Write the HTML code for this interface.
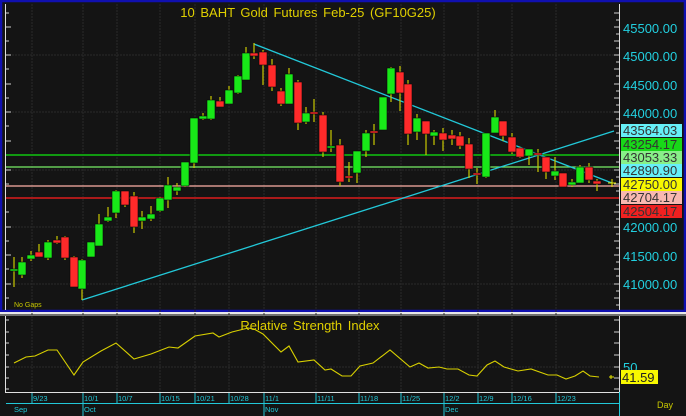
<!DOCTYPE html>
<html><head><meta charset="utf-8"><style>
html,body{margin:0;padding:0;background:#141414;width:686px;height:416px;overflow:hidden}
svg{display:block}
text{font-family:"Liberation Sans",sans-serif}
</style></head><body>
<svg width="686" height="416" viewBox="0 0 686 416" xmlns="http://www.w3.org/2000/svg">
<rect x="0" y="0" width="686" height="416" fill="#141414"/>
<!-- main panel frame -->
<rect x="1" y="1" width="684" height="310" fill="none" stroke="#1010b0" stroke-width="2.5"/>
<rect x="0" y="312" width="686" height="2" fill="#e8e8e8"/>
<rect x="0" y="314" width="686" height="2" fill="#707070"/>
<!-- grid -->
<g stroke="#2a2a2a" stroke-width="1" stroke-dasharray="2,1">
<line x1="6" y1="55" x2="619" y2="55"/><line x1="6" y1="112" x2="619" y2="112"/><line x1="6" y1="170" x2="619" y2="170"/><line x1="6" y1="227" x2="619" y2="227"/><line x1="6" y1="284" x2="619" y2="284"/>
<line x1="32" y1="4" x2="32" y2="392"/><line x1="83" y1="4" x2="83" y2="392"/><line x1="117" y1="4" x2="117" y2="392"/><line x1="160" y1="4" x2="160" y2="392"/><line x1="195" y1="4" x2="195" y2="392"/><line x1="229" y1="4" x2="229" y2="392"/><line x1="264" y1="4" x2="264" y2="392"/><line x1="316" y1="4" x2="316" y2="392"/><line x1="359" y1="4" x2="359" y2="392"/><line x1="401" y1="4" x2="401" y2="392"/><line x1="444" y1="4" x2="444" y2="392"/><line x1="478" y1="4" x2="478" y2="392"/><line x1="512" y1="4" x2="512" y2="392"/><line x1="556" y1="4" x2="556" y2="392"/>
<line x1="6" y1="367" x2="619" y2="367"/>
</g>
<!-- axes -->
<line x1="5.5" y1="4" x2="5.5" y2="310" stroke="#e0e0e0"/>
<line x1="619.5" y1="4" x2="619.5" y2="310" stroke="#e0e0e0"/>
<g stroke="#d0d0d0">
<path d="M6 13h3M6 27h5M6 41h3M6 55h5M6 69h3M6 84h5M6 98h3M6 112h5M6 126h3M6 141h5M6 155h3M6 170h5M6 184h3M6 198h5M6 212h3M6 227h5M6 241h3M6 255h5M6 269h3M6 284h5M6 298h3"/>
<path d="M614 13h5M616 20h3M614 27h5M616 34h3M614 41h5M616 48h3M614 55h5M616 62h3M614 69h5M616 76h3M614 84h5M616 91h3M614 98h5M616 105h3M614 112h5M616 119h3M614 126h5M616 133h3M614 141h5M616 148h3M614 155h5M616 162h3M614 170h5M616 177h3M614 184h5M616 191h3M614 198h5M616 205h3M614 212h5M616 219h3M614 227h5M616 234h3M614 241h5M616 248h3M614 255h5M616 262h3M614 269h5M616 276h3M614 284h5M616 291h3M614 298h5M616 305h3"/>
</g>
<!-- horizontal lines -->
<line x1="6" y1="155" x2="619" y2="155" stroke="#119911" stroke-width="2"/>
<line x1="6" y1="167" x2="619" y2="167" stroke="#77ee66" stroke-width="1.3"/>
<line x1="6" y1="186" x2="619" y2="186" stroke="#ffb0a8" stroke-width="1.3"/>
<line x1="6" y1="198" x2="619" y2="198" stroke="#aa1a1a" stroke-width="2"/>
<!-- trend lines -->
<line x1="254" y1="44" x2="612" y2="183" stroke="#22c8d8" stroke-width="1.3"/>
<line x1="82" y1="300" x2="614" y2="131" stroke="#22c8d8" stroke-width="1.3"/>
<!-- candles -->
<g stroke="#c8c800" stroke-width="1.2" id="w">
<path d="M14 257V287M22 257V278M31 251V261M39 244V257M48 240V260M57 236V244M65 236V260M74 256V287M82 259V300M91 255V257M99 214V246M108 207V222M116 190V218M125 191V207M134 192V233M142 211V229M151 206V221M160 197V212M168 177V208M177 183V195M185 162V187M194 118V168M203 113V120M211 96V120M220 97V107M229 86V104M238 75V94M246 47V80M254 43V59M263 50V85M272 59V91M281 88V106M289 68V104M298 80V130M306 107V124M314 99V122M323 112V157M331 130V152M340 139V186M349 162V182M357 151V183M366 130V157M374 124V145M383 97V130M391 67V102M400 66V111M408 80V145M417 114V140M426 121V155M434 130V145M443 128V151M452 130V145M460 132V149M469 138V178M477 168V184M486 133V178M495 110V133M503 121V141M512 133V154M520 147V158M529 149V165M538 149V172M546 157V179M555 157V180M563 173V187M572 179V187M580 165V183M589 163V183M597 179V191"/>
</g>
<g fill="#18e818" stroke="#0a0a0a" stroke-width="0.6">
<rect x="10" y="269" width="8" height="2"/><rect x="18" y="262" width="8" height="13"/><rect x="27" y="255" width="8" height="4"/><rect x="44" y="242" width="8" height="16"/><rect x="78" y="260" width="8" height="29"/><rect x="87" y="242" width="8" height="15"/><rect x="95" y="224" width="8" height="22"/><rect x="104" y="217" width="8" height="4"/><rect x="112" y="191" width="8" height="22"/><rect x="138" y="217" width="8" height="4"/><rect x="147" y="214" width="8" height="5"/><rect x="156" y="198" width="8" height="13"/><rect x="164" y="185" width="8" height="15"/><rect x="173" y="187" width="8" height="4"/><rect x="181" y="162" width="8" height="24"/><rect x="190" y="118" width="8" height="45"/><rect x="199" y="116" width="8" height="3"/><rect x="207" y="100" width="8" height="19"/><rect x="225" y="90" width="8" height="14"/><rect x="234" y="76" width="8" height="17"/><rect x="242" y="53" width="8" height="27"/><rect x="285" y="74" width="8" height="30"/><rect x="302" y="113" width="8" height="9"/><rect x="327" y="146" width="8" height="2"/><rect x="353" y="151" width="8" height="22"/><rect x="362" y="133" width="8" height="18"/><rect x="379" y="97" width="8" height="33"/><rect x="387" y="68" width="8" height="26"/><rect x="413" y="118" width="8" height="14"/><rect x="430" y="132" width="8" height="4"/><rect x="482" y="133" width="8" height="44"/><rect x="491" y="117" width="8" height="16"/><rect x="525" y="149" width="8" height="7"/><rect x="551" y="171" width="8" height="5"/><rect x="568" y="182" width="8" height="3"/><rect x="576" y="167" width="8" height="16"/>
</g>
<g fill="#ff2a2a" stroke="#0a0a0a" stroke-width="0.6">
<rect x="35" y="252" width="8" height="5"/><rect x="53" y="240" width="8" height="3"/><rect x="61" y="237" width="8" height="21"/><rect x="70" y="257" width="8" height="30"/><rect x="121" y="191" width="8" height="14"/><rect x="130" y="196" width="8" height="31"/><rect x="216" y="101" width="8" height="6"/><rect x="250" y="53" width="8" height="3"/><rect x="259" y="52" width="8" height="13"/><rect x="268" y="65" width="8" height="22"/><rect x="277" y="91" width="8" height="13"/><rect x="294" y="82" width="8" height="41"/><rect x="310" y="112" width="8" height="2"/><rect x="319" y="115" width="8" height="37"/><rect x="336" y="145" width="8" height="37"/><rect x="345" y="176" width="8" height="2"/><rect x="370" y="131" width="8" height="2"/><rect x="396" y="72" width="8" height="21"/><rect x="404" y="84" width="8" height="50"/><rect x="422" y="121" width="8" height="13"/><rect x="439" y="133" width="8" height="7"/><rect x="448" y="135" width="8" height="4"/><rect x="456" y="136" width="8" height="10"/><rect x="465" y="144" width="8" height="25"/><rect x="473" y="173" width="8" height="2"/><rect x="499" y="121" width="8" height="15"/><rect x="508" y="137" width="8" height="15"/><rect x="516" y="148" width="8" height="9"/><rect x="534" y="153" width="8" height="2"/><rect x="542" y="157" width="8" height="15"/><rect x="559" y="173" width="8" height="14"/><rect x="585" y="167" width="8" height="13"/><rect x="593" y="181" width="8" height="3"/>
</g>
<path d="M608 183h8M612 179v8" stroke="#e8e800" stroke-width="1"/>
<!-- title -->
<text x="308" y="17" fill="#e0d000" font-size="13" text-anchor="middle" word-spacing="2">10 BAHT  Gold  Futures  Feb-25  (GF10G25)</text>
<text x="14" y="307" fill="#c8c800" font-size="7">No Gaps</text>
<!-- right labels -->
<g font-size="13" fill="#22d0e0">
<text x="623" y="33">45500.00</text><text x="623" y="61">45000.00</text><text x="623" y="90">44500.00</text><text x="623" y="118">44000.00</text><text x="623" y="232">42000.00</text><text x="623" y="261">41500.00</text><text x="623" y="289">41000.00</text>
</g>
<rect x="621" y="124" width="61" height="13" fill="#66f0f8"/>
<rect x="621" y="138" width="61" height="13" fill="#18d818"/>
<rect x="621" y="151" width="61" height="13" fill="#88f088"/>
<rect x="621" y="164" width="61" height="13" fill="#66f0f8"/>
<rect x="621" y="178" width="61" height="13" fill="#f8f800"/>
<rect x="621" y="191" width="61" height="13" fill="#f8b8b0"/>
<rect x="621" y="205" width="61" height="13" fill="#f02020"/>
<g font-size="13" fill="#333">
<text x="623" y="135">43564.03</text><text x="623" y="149">43254.17</text><text x="623" y="162">43053.33</text><text x="623" y="175">42890.90</text><text x="623" y="189">42750.00</text><text x="623" y="202">42704.17</text><text x="623" y="216">42504.17</text>
</g>
<!-- RSI panel -->
<line x1="5.5" y1="316" x2="5.5" y2="392" stroke="#e0e0e0"/>
<line x1="619.5" y1="316" x2="619.5" y2="392" stroke="#e0e0e0"/>
<line x1="5" y1="392.5" x2="620" y2="392.5" stroke="#e0e0e0"/>
<g stroke="#d0d0d0"><path d="M6 320h3M6 332h3M6 343h3M6 355h3M6 367h3M6 378h3M6 389h3M614 320h5M614 332h5M614 343h5M614 355h5M614 367h5M614 378h5M614 389h5"/></g>
<text x="310" y="330" fill="#e0d000" font-size="13" text-anchor="middle" word-spacing="2">Relative  Strength  Index</text>
<polyline fill="none" stroke="#d8d000" stroke-width="1.1" points="14,363 26,357 35,356 48,350 57,350 74,375 83,362 101,351 116,343 134,359 151,354 169,347 178,348 195,336 213,333 219,337 232,332 248,328 254,329 263,334 281,352 289,346 298,362 314,360 325,370 331,369 342,376 351,376 360,366 373,363 390,350 410,367 419,363 428,368 439,367 447,369 458,369 469,375 477,376 487,365 495,361 504,367 518,371 531,369 548,375 557,375 566,379 575,376 583,371 590,376 599,377"/>
<text x="623" y="372" fill="#22d0e0" font-size="13">50</text>
<path d="M609 377h5M611 375v4" stroke="#e8e800"/>
<rect x="621" y="370" width="37" height="14" fill="#f8f800"/>
<text x="622" y="382" fill="#222" font-size="13">41.59</text>
<!-- date axis -->
<line x1="6" y1="403.5" x2="620" y2="403.5" stroke="#22c8d8"/>
<line x1="619.5" y1="392" x2="619.5" y2="416" stroke="#22c8d8"/>
<g stroke="#22c8d8"><path d="M32 393v10M83 393v23M117 393v10M160 393v10M195 393v10M229 393v10M264 393v23M316 393v10M359 393v10M401 393v10M444 393v23M478 393v10M512 393v10M556 393v10"/></g>
<g fill="#22c8d8" font-size="7.5">
<text x="33" y="401">9/23</text><text x="84" y="401">10/1</text><text x="118" y="401">10/7</text><text x="161" y="401">10/15</text><text x="196" y="401">10/21</text><text x="230" y="401">10/28</text><text x="265" y="401">11/1</text><text x="317" y="401">11/11</text><text x="360" y="401">11/18</text><text x="402" y="401">11/25</text><text x="445" y="401">12/2</text><text x="479" y="401">12/9</text><text x="513" y="401">12/16</text><text x="557" y="401">12/23</text>
<text x="14" y="412">Sep</text><text x="84" y="412">Oct</text><text x="265" y="412">Nov</text><text x="445" y="412">Dec</text>
</g>
<text x="657" y="408" fill="#c8c800" font-size="9">Day</text>
</svg>
</body></html>
